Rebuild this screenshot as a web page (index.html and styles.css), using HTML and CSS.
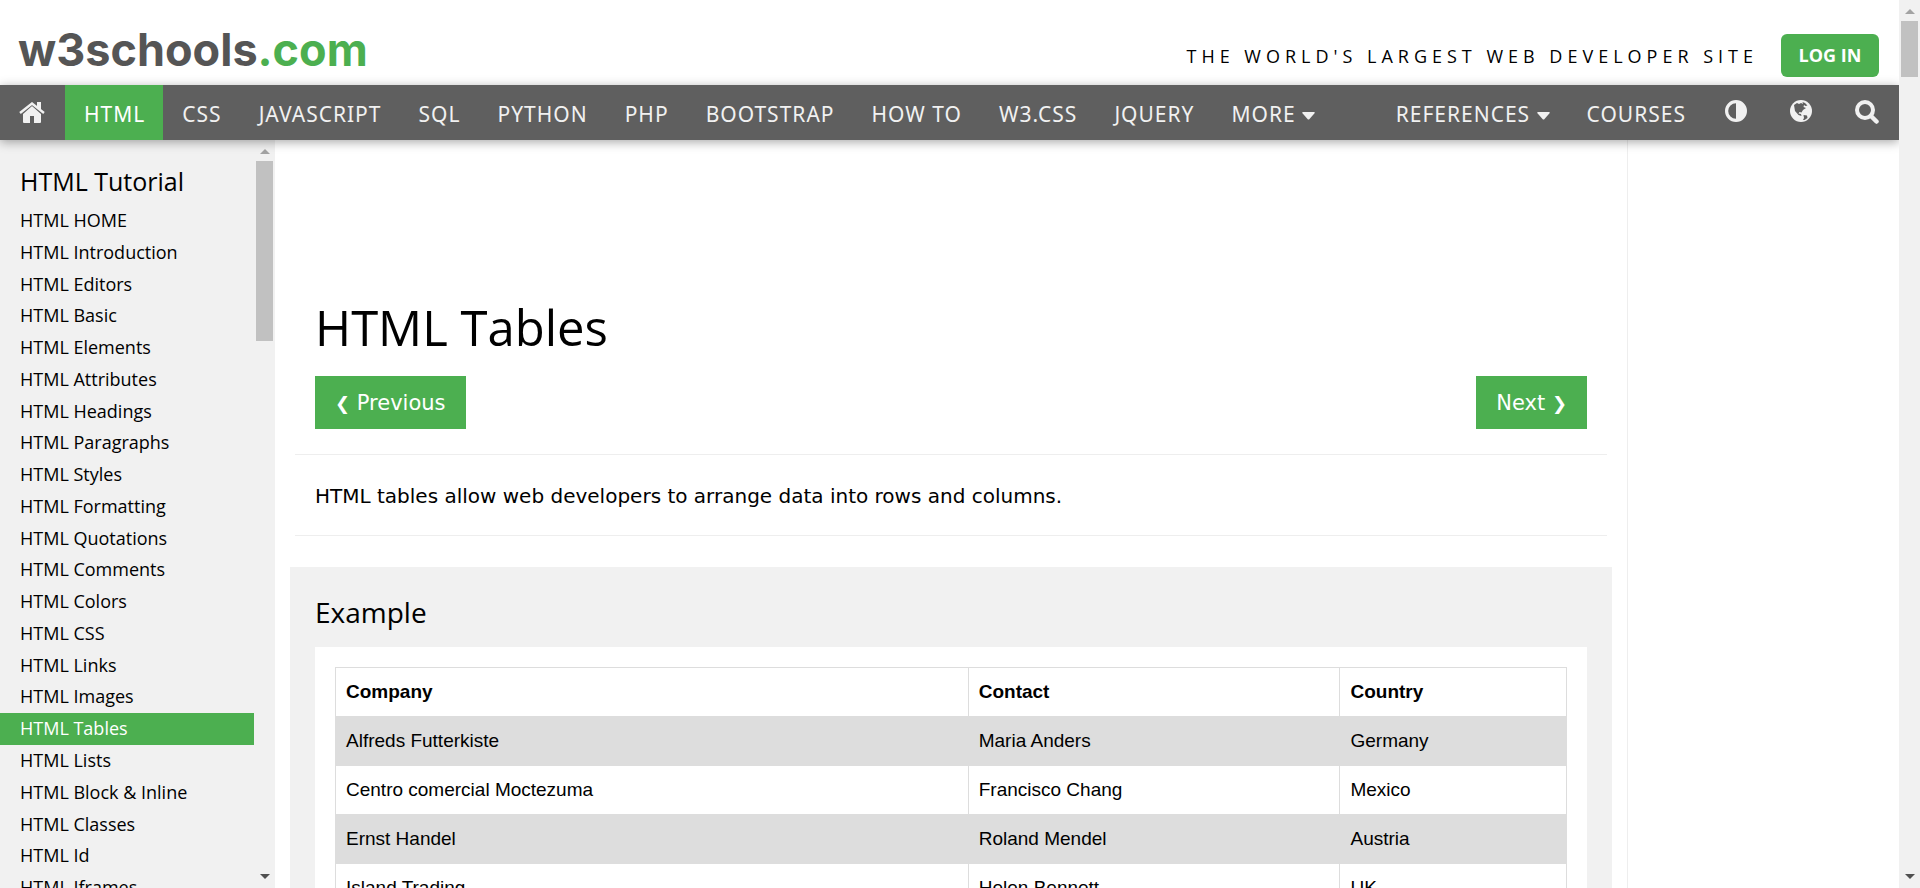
FILE: index.html
```html
<!DOCTYPE html>
<html lang="en">
<head>
<meta charset="utf-8">
<title>HTML Tables</title>
<link rel="stylesheet" href="styles.css">
</head>
<body>
<div class="page">
  <header class="header">
    <a class="logo" href="#">w3schools<span class="logo-dot">.com</span></a>
    <div class="header-right">
      <span class="tagline">THE WORLD'S LARGEST WEB DEVELOPER SITE</span>
      <a class="login" href="#">LOG IN</a>
    </div>
  </header>
  <nav class="topnav">
    <a class="home" href="#" aria-label="Home"><svg width="26" height="22" viewBox="0 0 26 22"><path d="M13 4 22 12V20Q22 21 21 21H15V14H11V21H5Q4 21 4 20V12Z"/><path d="M1 11 13 1 25 11" fill="none" stroke="#5f5f5f" stroke-width="4"/><path d="M1 11 13 1.500 25 11" fill="none" stroke="#f1f1f1" stroke-width="2.400"/><path d="M18 0h4v8l-4-3z"/></svg></a>
    <a class="active" href="#">HTML</a>
    <a href="#">CSS</a>
    <a href="#">JAVASCRIPT</a>
    <a href="#">SQL</a>
    <a href="#">PYTHON</a>
    <a href="#">PHP</a>
    <a href="#">BOOTSTRAP</a>
    <a href="#">HOW TO</a>
    <a href="#">W3.CSS</a>
    <a href="#">JQUERY</a>
    <a href="#">MORE <svg class="caret" width="13" height="8" viewBox="0 0 13 8"><path d="M1 0H12Q13.500 0 12.500 1.300L7.500 7Q6.500 8 5.500 7L.5 1.300Q-.5 0 1 0Z"/></svg></a>
    <span class="grow"></span>
    <a href="#">REFERENCES <svg class="caret" width="13" height="8" viewBox="0 0 13 8"><path d="M1 0H12Q13.500 0 12.500 1.300L7.500 7Q6.500 8 5.500 7L.5 1.300Q-.5 0 1 0Z"/></svg></a>
    <a href="#">COURSES</a>
    <a class="tool" href="#" aria-label="Toggle contrast"><svg width="22" height="22" viewBox="0 0 22 22"><path fill-rule="evenodd" d="M11 0A11 11 0 1 1 11 22A11 11 0 1 1 11 0ZM11 3.200A7.800 7.800 0 0 0 11 18.800Z"/></svg></a>
    <a class="tool" href="#" aria-label="Translate"><svg width="22" height="22" viewBox="0 0 22 22"><circle cx="11" cy="11" r="11"/><path class="land" d="M4 5 7 3 9 4 11 3 13 4 12.500 2 15 3 17.500 5.500 15.500 6 14 5 13.500 7 16 8 13 10 11.500 12.500 9.500 12 8.500 13.500 11 14 11.500 16 8.500 15 5 11 4.500 8ZM13.500 15 17 15.500 17.500 18 14.500 20 13 20 14 18Z"/></svg></a>
    <a class="tool" href="#" aria-label="Search"><svg width="24" height="24" viewBox="0 0 24 24"><circle cx="10" cy="10" r="8" fill="none" stroke="#f1f1f1" stroke-width="4"/><path d="M16 16 21.500 21.500" stroke="#f1f1f1" stroke-width="4.500" stroke-linecap="round"/></svg></a>
  </nav>
  <div class="body">
    <aside class="sidebar">
      <div class="menu">
        <h2>HTML Tutorial</h2>
        <a href="#">HTML HOME</a>
        <a href="#">HTML Introduction</a>
        <a href="#">HTML Editors</a>
        <a href="#">HTML Basic</a>
        <a href="#">HTML Elements</a>
        <a href="#">HTML Attributes</a>
        <a href="#">HTML Headings</a>
        <a href="#">HTML Paragraphs</a>
        <a href="#">HTML Styles</a>
        <a href="#">HTML Formatting</a>
        <a href="#">HTML Quotations</a>
        <a href="#">HTML Comments</a>
        <a href="#">HTML Colors</a>
        <a href="#">HTML CSS</a>
        <a href="#">HTML Links</a>
        <a href="#">HTML Images</a>
        <a class="current" href="#">HTML Tables</a>
        <a href="#">HTML Lists</a>
        <a href="#">HTML Block &amp; Inline</a>
        <a href="#">HTML Classes</a>
        <a href="#">HTML Id</a>
        <a href="#">HTML Iframes</a>
      </div>
      <div class="scrollbar"><i class="up"></i><i class="thumb thumb-menu"></i><i class="down"></i></div>
    </aside>
    <main class="main">
      <h1>HTML Tables</h1>
      <div class="pager">
        <a class="btn" href="#"><span class="chevron">❮</span> Previous</a>
        <a class="btn" href="#">Next <span class="chevron">❯</span></a>
      </div>
      <hr>
      <p class="intro">HTML tables allow web developers to arrange data into rows and columns.</p>
      <hr>
      <section class="example">
        <h3>Example</h3>
        <div class="sheet">
          <table>
            <colgroup><col class="c1"><col class="c2"><col class="c3"></colgroup>
            <tr><th>Company</th><th>Contact</th><th>Country</th></tr>
            <tr><td>Alfreds Futterkiste</td><td>Maria Anders</td><td>Germany</td></tr>
            <tr><td>Centro comercial Moctezuma</td><td>Francisco Chang</td><td>Mexico</td></tr>
            <tr><td>Ernst Handel</td><td>Roland Mendel</td><td>Austria</td></tr>
            <tr><td>Island Trading</td><td>Helen Bennett</td><td>UK</td></tr>
          </table>
        </div>
      </section>
    </main>
    <div class="rail"></div>
  </div>
</div>
<div class="scrollbar page-scroll"><i class="up"></i><i class="thumb thumb-page"></i><i class="down"></i></div>
</body>
</html>
```
FILE: styles.css
```css
* { box-sizing: border-box; }
body {
  margin: 0;
  height: 100vh;
  display: flex;
  overflow: hidden;
  background: #fff;
  color: #000;
  font-family: "DejaVu Sans", Verdana, sans-serif;
  font-size: 20px;
}
a { color: inherit; text-decoration: none; }
h1, h2, h3 { margin: 0; font-family: "Open Sans", "Noto Sans", sans-serif; font-weight: 400; }
.page { flex: 1; min-width: 0; display: flex; flex-direction: column; }

.header {
  flex: none;
  height: 85px;
  padding: 0 20px 0 18px;
  display: flex;
  justify-content: space-between;
  align-items: flex-start;
}
.logo { padding-top: 22px; font: 700 45px/56px Inter, sans-serif; color: #555; }
.logo-dot { color: #4caf50; }
.header-right {
  display: flex;
  align-items: center;
  gap: 23px;
  padding-top: 34px;
  font-family: "Open Sans", sans-serif;
}
.tagline { font-size: 18px; font-weight: 400; letter-spacing: 5px; }
.login {
  width: 98px;
  line-height: 43px;
  border-radius: 6px;
  background: #4caf50;
  color: #fff;
  font-size: 18px;
  font-weight: 700;
  text-align: center;
}

.topnav {
  flex: none;
  position: relative;
  z-index: 1;
  height: 55px;
  display: flex;
  background: #5f5f5f;
  box-shadow: 0 2px 10px rgba(0, 0, 0, .35);
  color: #f1f1f1;
  font: 400 21px/59px "Noto Sans", sans-serif;
  letter-spacing: 1px;
}
.topnav a { padding: 0 18px 0 19px; white-space: nowrap; }
.topnav svg { fill: currentColor; }
.topnav .active { background: #4caf50; color: #fff; }
.topnav .home { width: 65px; padding: 17px 0 0 19px; line-height: 0; }
.topnav .tool { width: 65px; padding: 15px 0 0 21px; line-height: 0; }
.topnav .land { fill: #5f5f5f; }
.caret { vertical-align: 2px; }
.grow { flex: 1; }

.body { flex: 1; min-height: 0; display: flex; }
.sidebar { flex: none; width: 275px; display: flex; background: #f1f1f1; }
.menu {
  flex: 1;
  overflow: hidden;
  padding-top: 23px;
  font: 400 18px/1.765 "Open Sans", sans-serif;
}
.menu h2 { padding: 0 20px 6px; font-size: 25px; line-height: 36px; }
.menu a { display: block; padding-left: 20px; }
.menu .current { background: #4caf50; color: #fff; }

.scrollbar {
  flex: none;
  width: 21px;
  display: flex;
  flex-direction: column;
  align-items: center;
  background: #f1f1f1;
}
.page-scroll { z-index: 2; }
.up { margin: 9px 0 7px; border: 5px solid transparent; border-top: 0; border-bottom-color: #a3a3a3; }
.down { margin: auto 0 9px; border: 5px solid transparent; border-bottom: 0; border-top-color: #505050; }
.thumb { width: 17px; background: #c1c1c1; }
.thumb-menu { height: 180px; }
.thumb-page { height: 56px; }

.main { flex: 1; min-width: 0; overflow: hidden; padding: 149px 20px 0; }
.main h1 { padding: 0 20px; font-size: 49px; line-height: 76px; }
.pager { display: flex; justify-content: space-between; padding: 11px 20px 25px; }
.btn { height: 53px; padding: 0 20px; background: #4caf50; color: #fff; line-height: 54px; font-size: 21px; }
.chevron { font-size: 18px; font-weight: 700; }
hr { margin: 0; border: 0; border-top: 1px solid #eee; }
.intro { margin: 0; padding: 27px 20px 25px; line-height: 28px; }
.example { margin: 31px -5px 0; padding: 25px 25px 0; background: #f1f1f1; }
.example h3 { font-size: 28px; line-height: 40px; padding-bottom: 15px; }
.sheet { padding: 20px; background: #fff; }
table {
  width: 100%;
  border-collapse: collapse;
  font-family: "Liberation Sans", Arial, sans-serif;
  font-size: 19px;
  table-layout: fixed;
}
.c1 { width: 51.4%; }
.c2 { width: 30.2%; }
th, td { height: 49px; padding: 0 10px; border: 1px solid #ddd; text-align: left; }
tr:nth-child(even) { background: #ddd; }
.rail { flex: none; width: 272px; border-left: 1px solid #eee; }
```
